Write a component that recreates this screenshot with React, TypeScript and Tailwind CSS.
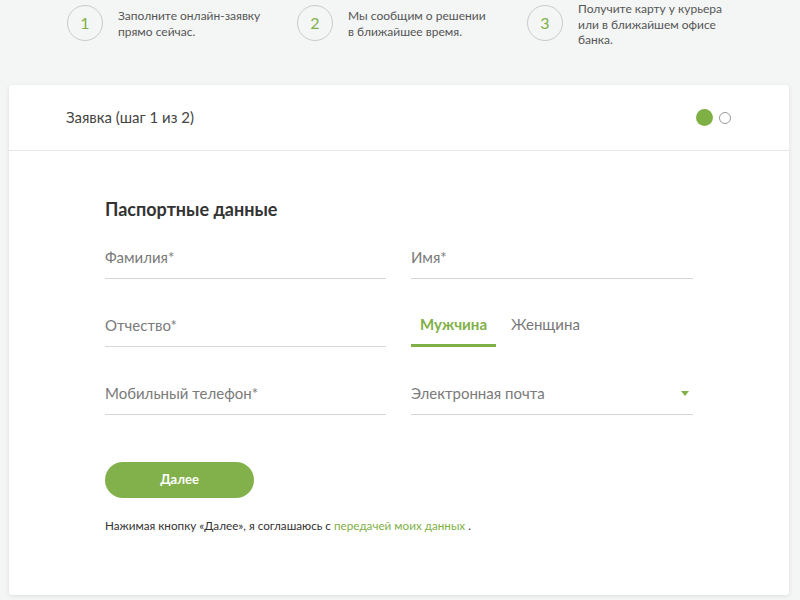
import { useState } from "react";

const steps = [
  { n: 1, text: ["Заполните онлайн-заявку", "прямо сейчас."] },
  { n: 2, text: ["Мы сообщим о решении", "в ближайшее время."] },
  { n: 3, text: ["Получите карту у курьера", "или в ближайшем офисе", "банка."] },
];

function Field({ label, dropdown }: { label: string; dropdown?: boolean }) {
  return (
    <div className="flex h-[68px] items-end">
      <div className="flex h-[42px] w-full items-center justify-between border-b border-[#d6d6d6]">
        <span className="text-[15px] text-[#7a7a7a]">{label}</span>
        {dropdown && (
          <span className="mr-[4px] h-0 w-0 border-x-[4px] border-t-[5px] border-x-transparent border-t-[#7fb046]" />
        )}
      </div>
    </div>
  );
}

export default function App() {
  const [gender, setGender] = useState("m");

  return (
    <div className="min-h-[600px] bg-[#f4f6f6] font-['Lato','Open_Sans',sans-serif] text-[#333]">
      <div className="flex h-[85px] pl-[67px] pt-[5px]">
        {steps.map((s) => (
          <div key={s.n} className="flex w-[230px] items-start">
            <div className="flex h-[36px] w-[36px] shrink-0 items-center justify-center rounded-full border border-[#c9c9c9] text-[16px] text-[#7fb046]">
              {s.n}
            </div>
            <div
              className={
                s.text.length === 3
                  ? "ml-[15px] mt-[-4px] text-[12px] leading-[15.5px] text-[#555]"
                  : "ml-[15px] mt-[3px] text-[12px] leading-[15.5px] text-[#555]"
              }
            >
              {s.text.map((t) => (
                <div key={t}>{t}</div>
              ))}
            </div>
          </div>
        ))}
      </div>

      <div className="mx-[9px] w-[780px] rounded-[3px] bg-white shadow-[0_1px_4px_rgba(0,0,0,0.1)]">
        <div className="flex h-[66px] items-center justify-between border-b border-[#e6e6e6] pl-[57px] pr-[58px]">
          <span className="text-[15px] text-[#444]">Заявка (шаг 1 из 2)</span>
          <div className="flex items-center gap-[6px]">
            <span className="h-[17px] w-[17px] rounded-full bg-[#7fb046]" />
            <span className="h-[12px] w-[12px] rounded-full border-[1.5px] border-[#999]" />
          </div>
        </div>

        <div className="px-[96px] pb-[60px] pt-[44px]">
          <h2 className="text-[18px] font-bold leading-[28px] text-[#333]">Паспортные данные</h2>

          <div className="mt-[-12px] grid grid-cols-[281px_282px] gap-x-[25px]">
            <Field label="Фамилия*" />
            <Field label="Имя*" />
            <Field label="Отчество*" />
            <div className="flex h-[68px] items-end">
              <div className="flex h-[44px] items-stretch">
                {[
                  ["m", "Мужчина"],
                  ["f", "Женщина"],
                ].map(([k, label]) => (
                  <button
                    key={k}
                    onClick={() => setGender(k)}
                    className={
                      gender === k
                        ? "flex items-center border-b-[3px] border-[#7fb046] px-[9px] pt-[2px] text-[15px] font-bold text-[#7fb046]"
                        : "flex items-center border-b-[3px] border-transparent px-[15px] pt-[2px] text-[15px] text-[#777]"
                    }
                  >
                    {label}
                  </button>
                ))}
              </div>
            </div>
            <Field label="Мобильный телефон*" />
            <Field label="Электронная почта" dropdown />
          </div>

          <button className="mt-[47px] h-[36px] w-[149px] rounded-full bg-[#82b14b] text-[13px] font-bold text-white">
            Далее
          </button>

          <p className="mt-[19px] text-[11.7px] text-[#333]">
            Нажимая кнопку «Далее», я соглашаюсь с{" "}
            <span className="text-[#7fb046]">передачей моих данных</span> .
          </p>
        </div>
      </div>
    </div>
  );
}
